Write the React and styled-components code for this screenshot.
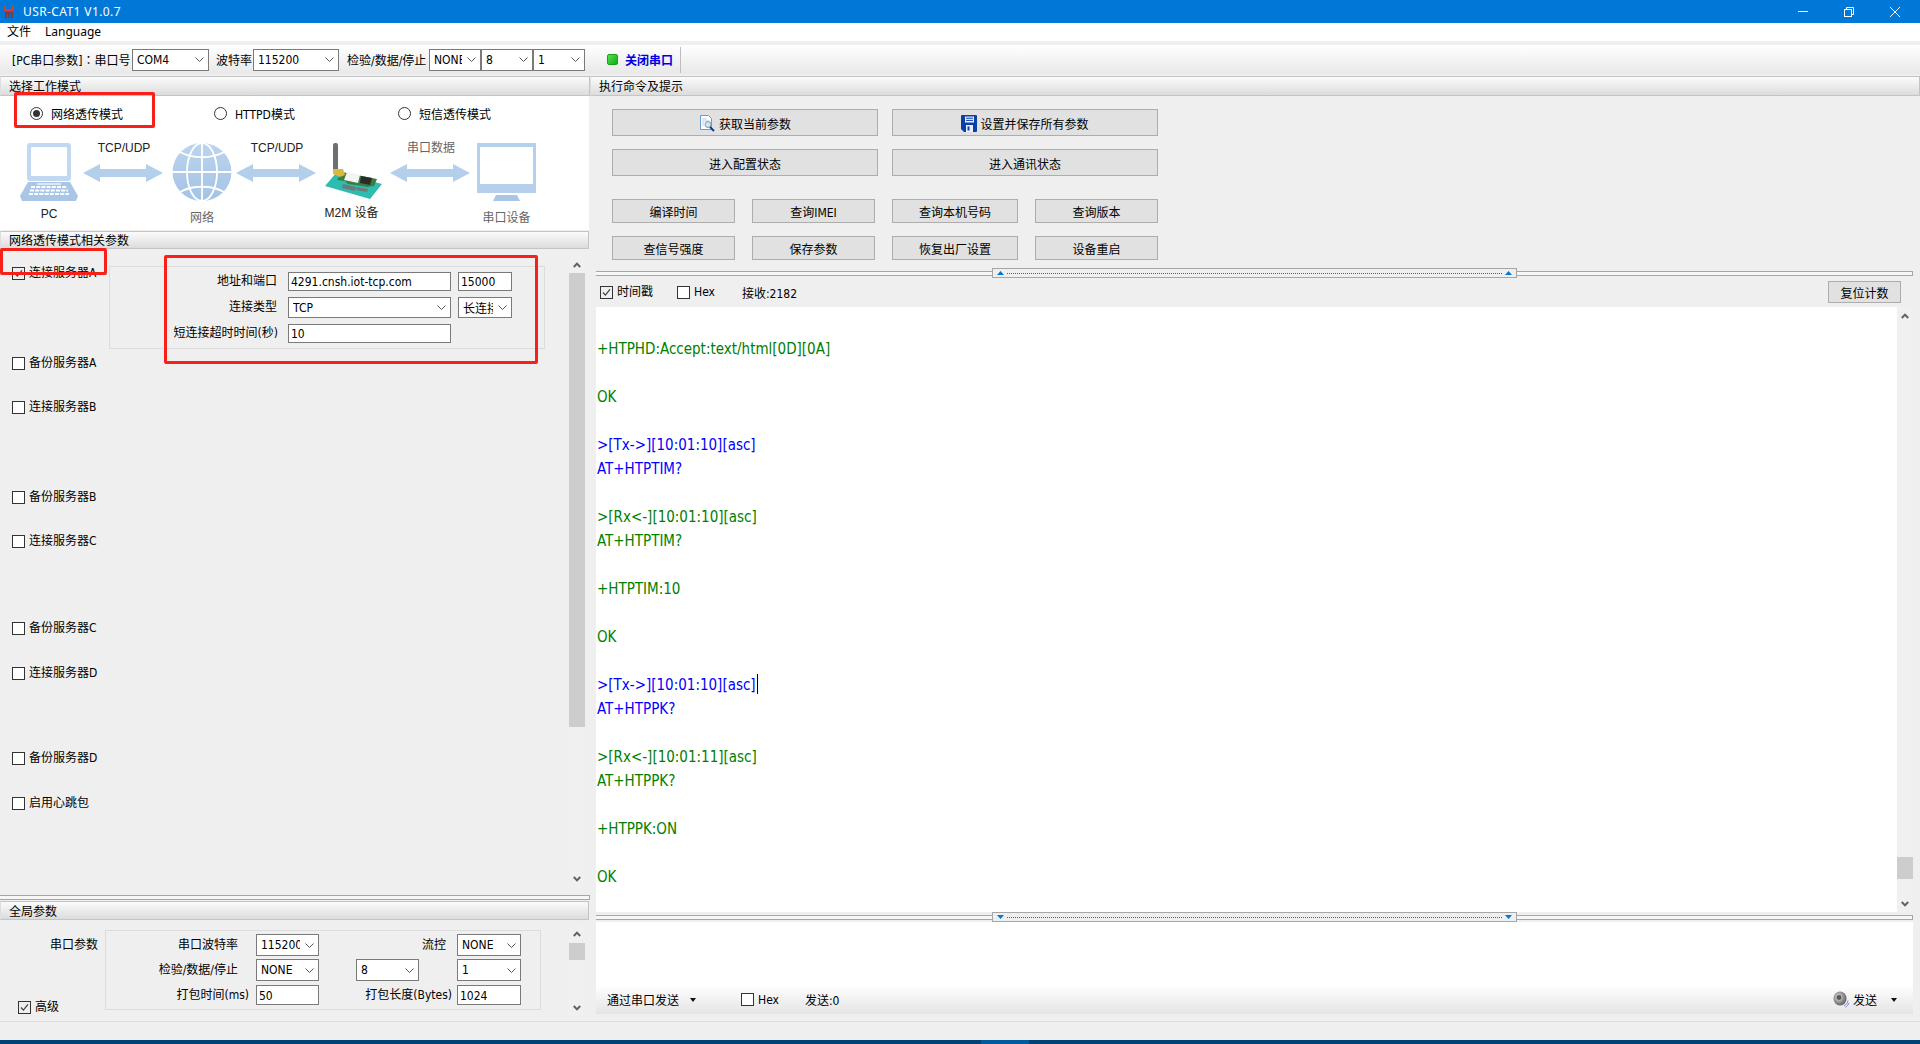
import styled, { createGlobalStyle } from "styled-components";

const GlobalStyle = createGlobalStyle`
  html, body { margin: 0; padding: 0; background: #efefef; }
  body {
    font-family: "DejaVu Sans Condensed", "Noto Sans CJK SC", sans-serif;
    font-size: 12px;
    color: #000;
  }
  * { box-sizing: border-box; }
`;

const Page = styled.div`
  width: 1920px;
  height: 1044px;
  display: flex;
  flex-direction: column;
  overflow: hidden;
  background: #efefef;
`;

/* window chrome */
const TitleBar = styled.div`
  height: 23px;
  background: #0078d7;
  color: #fff;
  display: flex;
  align-items: center;
  padding-left: 4px;
`;
const TitleText = styled.span`
  margin-left: 9px;
  line-height: 23px;
  font-family: "Noto Sans", sans-serif;
  letter-spacing: .4px;
`;
const WinControls = styled.div`
  margin-left: auto;
  display: flex;
  align-items: center;
  padding-right: 20px;
  gap: 36px;
`;
const MenuBar = styled.div`
  height: 18px;
  background: #fff;
  display: flex;
  align-items: center;
  padding-left: 7px;
  gap: 14px;
  line-height: 20px;
  margin-bottom: 4px;
  font-family: "Noto Sans", "Noto Sans CJK SC", sans-serif;
`;
const ToolBar = styled.div`
  height: 29px;
  background: linear-gradient(#fff, #e8e8e8);
  display: flex;
  align-items: center;
  padding-left: 12px;
`;
const ToolLabel = styled.span`
  width: ${p => p.$w}px;
  margin-left: ${p => p.$ml || 0}px;
  white-space: nowrap;
`;
const FullColon = styled.span`
  font-family: "Noto Sans CJK TC", sans-serif;
`;
const Led = styled.span`
  width: 11px;
  height: 11px;
  margin-left: 22px;
  border-radius: 2px;
  border: 1px solid #1a9e1a;
  background: linear-gradient(135deg, #55e055, #0fae0f);
`;
const PortToggle = styled.span`
  margin-left: 7px;
  color: #0000e6;
  font-weight: 700;
`;
const ToolSep = styled.span`
  width: 1px;
  height: 26px;
  margin-left: 7px;
  background: #bdbdbd;
`;

/* main split */
const Main = styled.div`
  flex: 1;
  display: grid;
  grid-template-columns: 590px 1fr;
  min-height: 0;
`;
const LeftColumn = styled.div`
  display: flex;
  flex-direction: column;
  padding-top: 2px;
  min-height: 0;
`;
const RightColumn = styled.div`
  display: flex;
  flex-direction: column;
  padding-top: 2px;
  min-height: 0;
`;
const SectionHeader = styled.div`
  height: ${p => p.$h}px;
  margin-top: ${p => p.$mt || 0}px;
  margin-right: ${p => p.$mr || 0}px;
  padding-left: 8px;
  line-height: ${p => p.$h + 1}px;
  background: linear-gradient(#fbfbfb, #dcdcdc);
  border: 1px solid #c4c4c4;
  border-left-color: #dedede;
  border-radius: 1px;
  overflow: hidden;
`;

const ModePanel = styled.div`
  position: relative;
  height: 134px;
  margin-right: 1px;
  background: #fff;
`;
const ModeRow = styled.div`
  height: 34px;
  display: flex;
  align-items: center;
`;
const ModeOption = styled.label`
  width: 184px;
  padding-left: 30px;
  display: flex;
  align-items: center;
  gap: 8px;
`;
const Radio = styled.span`
  width: 13px;
  height: 13px;
  border-radius: 50%;
  border: 1px solid #333;
  background: #fff;
  display: flex;
  align-items: center;
  justify-content: center;
  &::after {
    content: "";
    width: 7px;
    height: 7px;
    border-radius: 50%;
    background: ${p => (p.$on ? "#333" : "transparent")};
  }
`;
const Diagram = styled.div`
  display: flex;
  align-items: flex-start;
  padding: 13px 0 0 20px;
`;
const DeviceCell = styled.div`
  display: flex;
  flex-direction: column;
  align-items: center;
  width: ${p => p.$w}px;
  margin-left: ${p => p.$ml || 0}px;
`;
const DeviceLabel = styled.span`
  margin-top: ${p => p.$mt}px;
  margin-right: ${p => p.$mr || 0}px;
  line-height: 14px;
  white-space: nowrap;
  font-family: "Liberation Sans", "Noto Sans CJK SC", sans-serif;
  color: ${p => (p.$muted ? "#666" : "#222")};
`;
const LinkCell = styled.div`
  display: flex;
  flex-direction: column;
  align-items: center;
  width: 80px;
  margin-top: -2px;
  margin-left: ${p => p.$ml}px;
`;
const LinkLabel = styled.span`
  line-height: 14px;
  margin-bottom: 9px;
  padding-left: 2px;
  font-family: "Liberation Sans", "Noto Sans CJK SC", sans-serif;
  color: ${p => (p.$muted ? "#666" : "#222")};
`;

const Highlight = styled.div`
  position: absolute;
  left: ${p => p.$x}px;
  top: ${p => p.$y}px;
  width: ${p => p.$w}px;
  height: ${p => p.$h}px;
  border: 3px solid #f8211a;
  border-radius: 2px;
  pointer-events: none;
`;

/* left scroll area */
const ScrollArea = styled.div`
  position: relative;
  height: 644px;
  display: grid;
  grid-template-columns: 569px 16px;
`;
const ServerList = styled.div`
  display: flex;
  flex-direction: column;
`;
const ServerRow = styled.div`
  display: flex;
  align-items: flex-start;
  padding-left: ${p => p.$pl || 12}px;
  margin-top: ${p => p.$mt}px;
`;
const CheckItem = styled.label`
  display: flex;
  align-items: center;
  gap: 4px;
  height: ${p => p.$h || 16}px;
  line-height: 16px;
  margin-left: ${p => p.$ml || 0}px;
  white-space: nowrap;
`;
const Box = styled.span`
  width: 13px;
  height: 13px;
  border: 1px solid #333;
  background: ${p => (p.$plain ? "#fff" : "transparent")};
  display: flex;
  align-items: center;
  justify-content: center;
`;
const FirstCheck = styled.div`
  width: 97px;
  margin-top: 16px;
`;
const ServerGroup = styled.div`
  width: 436px;
  height: 83px;
  margin-top: 17px;
  padding-top: 5px;
  border: 1px solid #dcdcdc;
  display: grid;
  grid-template-columns: 171px 163px 54px;
  column-gap: 7px;
  row-gap: 6px;
  grid-template-rows: 19px 21px 19px;
`;
const FieldLabel = styled.span`
  justify-self: end;
  align-self: center;
  padding-right: ${p => p.$pr || 0}px;
  white-space: nowrap;
  line-height: 17px;
`;
const TextInput = styled.div`
  height: ${p => p.$h || 19}px;
  border: 1px solid #7a7a7a;
  background: #fff;
  padding-left: 2px;
  line-height: ${p => p.$h || 19}px;
  overflow: hidden;
  white-space: nowrap;
`;
const SelectBox = styled.div`
  width: ${p => (p.$w ? `${p.$w}px` : "auto")};
  height: ${p => p.$h || 22}px;
  margin-right: ${p => p.$mr || 0}px;
  justify-self: ${p => (p.$mr ? "end" : "stretch")};
  border: 1px solid #7a7a7a;
  background: #fff;
  display: flex;
  align-items: center;
  padding-left: 4px;
  flex: none;
`;
const SelectValue = styled.span`
  flex: 1;
  min-width: 0;
  overflow: hidden;
  white-space: nowrap;
`;
const SelectArrow = styled.span`
  width: 18px;
  flex: none;
  display: flex;
  justify-content: center;
`;

/* scrollbars */
const ScrollBar = styled.div`
  width: 16px;
  height: ${p => p.$h}px;
  margin-top: ${p => p.$mt || 0}px;
  margin-left: ${p => p.$ml || 0}px;
  flex: none;
  display: flex;
  flex-direction: column;
  background: #f0f0f0;
`;
const ScrollArrow = styled.span`
  height: 17px;
  flex: none;
  display: flex;
  align-items: center;
  justify-content: center;
`;
const ScrollTrack = styled.div`
  flex: 1;
  min-height: 0;
`;
const ScrollThumb = styled.div`
  height: ${p => p.$h}px;
  margin-top: ${p => p.$top || 0}px;
  background: #cdcdcd;
`;

/* splitters */
const Splitter = styled.div`
  position: relative;
  height: ${p => p.$h}px;
  flex: none;
  display: flex;
  align-items: center;
  background: ${p => p.$bg || "transparent"};
`;
const SplitLines = styled.div`
  flex: 1;
  height: 5px;
  border-top: 1px solid #a6a6a6;
  border-bottom: 1px solid #a6a6a6;
  border-right: 1px solid #a6a6a6;
  background: #f7f7f7;
`;
const SplitHandle = styled.div`
  position: absolute;
  left: 396px;
  top: 0;
  bottom: 0;
  width: 525px;
  padding: 0 4px;
  border: 1px solid #a6a6a6;
  background: #efefef;
  display: flex;
  align-items: center;
  gap: 3px;
`;
const DottedLine = styled.span`
  flex: 1;
  border-top: 1px dotted #0078d7;
`;

/* global parameters */
const GlobalBody = styled.div`
  flex: 1;
  display: flex;
  align-items: flex-start;
  padding-top: 10px;
`;
const GlobalSide = styled.div`
  width: 105px;
  height: 85px;
  display: flex;
  flex-direction: column;
  justify-content: space-between;
`;
const SideLabel = styled.span`
  align-self: flex-end;
  margin: 7px 7px 0 0;
  line-height: 16px;
`;
const SideCheck = styled.div`
  padding-left: 18px;
`;
const GlobalGroup = styled.div`
  width: 436px;
  height: 80px;
  padding: 3px 19px 0 0;
  border: 1px solid #dcdcdc;
  display: grid;
  grid-template-columns: 150px 63px 1fr 64px;
  grid-template-rows: 22px 23px 20px;
  row-gap: 3px;
`;

/* right side */
const CommandRow = styled.div`
  display: grid;
  grid-template-columns: ${p => p.$cols};
  column-gap: ${p => p.$gap}px;
  margin-top: ${p => p.$mt}px;
  padding-left: 22px;
`;
const CommandButton = styled.button`
  height: ${p => p.$h}px;
  padding: ${p => (p.$h > 25 ? "2px 0 0" : "0")};
  border: 1px solid #adadad;
  border-radius: 0;
  background: #e1e1e1;
  font: inherit;
  color: #000;
  display: flex;
  align-items: center;
  justify-content: center;
  gap: 3px;
`;
const RxWrap = styled.div`
  flex: 1;
  min-height: 0;
  display: flex;
  flex-direction: column;
  margin-top: 8px;
  padding: 0 7px 0 6px;
`;
const RxBar = styled.div`
  height: 28px;
  flex: none;
  display: flex;
  align-items: center;
  padding: 0 12px 0 4px;
`;
const Counter = styled.span`
  margin-left: ${p => p.$ml}px;
  white-space: nowrap;
`;
const ResetButton = styled(CommandButton)`
  width: 73px;
  margin-left: auto;
`;
const TerminalWrap = styled.div`
  height: 605px;
  margin-top: 1px;
  flex: none;
  display: flex;
  background: #fff;
`;
const TerminalText = styled.div`
  flex: 1;
  padding: 6px 0 0 1px;
  font-size: 15px;
  line-height: 24px;
  overflow: hidden;
`;
const TermLine = styled.div`
  height: 24px;
  white-space: nowrap;
  color: ${p => (p.$tx ? "#0000ff" : "#008000")};
`;
const Caret = styled.span`
  display: inline-block;
  width: 1px;
  height: 20px;
  margin-left: 1px;
  vertical-align: -4px;
  background: #000;
`;
const SendBox = styled.div`
  height: 92px;
  flex: none;
  display: flex;
  flex-direction: column;
  background: #fff;
`;
const SendInput = styled.div`
  flex: 1;
`;
const SendBar = styled.div`
  height: 29px;
  flex: none;
  display: flex;
  align-items: center;
  padding: 0 16px 0 11px;
  background: linear-gradient(#fff, #e4e4e4);
`;
const DropMark = styled.span`
  margin-left: ${p => p.$ml}px;
  border-left: 3px solid transparent;
  border-right: 3px solid transparent;
  border-top: 4px solid #111;
`;
const SendAction = styled.div`
  margin-left: auto;
  display: flex;
  align-items: center;
  gap: 3px;
`;

const Footer = styled.div`
  height: 19px;
  flex: none;
  border-top: 1px solid #dcdcdc;
`;
const TaskBar = styled.div`
  height: 4px;
  flex: none;
  background: #004275;
  padding-left: 981px;
`;
const TaskItem = styled.div`
  width: 48px;
  height: 4px;
  background: #005a9e;
`;

/* drawings */
const AppIcon = () => (
  <svg width="10" height="12" viewBox="0 0 10 12">
    <path d="M0 0h2v3h6V0h2v5H0z" fill="#c8403c" />
    <path d="M1 6h8v6H7V8H6v4H4V8H3v4H1z" fill="#7d3a4e" />
  </svg>
);
const MinIcon = () => (
  <svg width="10" height="2" viewBox="0 0 10 2"><rect width="10" height="1" fill="#fff" /></svg>
);
const RestoreIcon = () => (
  <svg width="10" height="10" viewBox="0 0 10 10" fill="none" stroke="#fff">
    <rect x=".5" y="2.5" width="7" height="7" />
    <path d="M2.5 2.5v-2h7v7h-2" />
  </svg>
);
const CloseIcon = () => (
  <svg width="10" height="10" viewBox="0 0 10 10" stroke="#fff"><path d="M0 0l10 10M10 0L0 10" /></svg>
);
const Chevron = () => (
  <svg width="9" height="5" viewBox="0 0 9 5" fill="none" stroke="#555"><path d="M.5.5l4 4 4-4" /></svg>
);
const ScrollUp = () => (
  <svg width="8" height="6" viewBox="0 0 8 6" fill="none" stroke="#606060" strokeWidth="2"><path d="M.8 5L4 1.6 7.2 5" /></svg>
);
const ScrollDown = () => (
  <svg width="8" height="6" viewBox="0 0 8 6" fill="none" stroke="#606060" strokeWidth="2"><path d="M.8 1L4 4.4 7.2 1" /></svg>
);
const Tick = () => (
  <svg width="11" height="11" viewBox="0 0 11 11" fill="none" stroke="#444" strokeWidth="1.3"><path d="M2 5.5l2.4 2.6L9 2.4" /></svg>
);
const LinkArrow = () => (
  <svg width="80" height="18" viewBox="0 0 80 18">
    <path d="M0 9L17 0v5h46V0l17 9-17 9v-5H17v5z" fill="#b3cfeb" />
  </svg>
);
const Laptop = () => (
  <svg width="58" height="58" viewBox="0 0 58 58">
    <rect x="7" width="44" height="38" rx="3" fill="#c2d8f0" />
    <rect x="11" y="4" width="36" height="29" rx="1" fill="#fff" />
    <path d="M8 39h42l8 14-2 5H2l-2-5z" fill="#a9c6e6" />
    <rect x="17" y="40" width="24" height="2" fill="#dbe8f6" />
    <path d="M11 44h36M10 47.5h38M9 51h40" stroke="#fff" strokeWidth="2.2" strokeDasharray="4 1.2" />
  </svg>
);
const Globe = () => (
  <svg width="60" height="58" viewBox="0 0 60 58" fill="none">
    <defs>
      <linearGradient id="globeFill" x1="0" y1="0" x2="0" y2="1">
        <stop offset="0" stopColor="#bcd4ee" />
        <stop offset="1" stopColor="#a4c3e5" />
      </linearGradient>
    </defs>
    <ellipse cx="30" cy="29" rx="29.5" ry="29" fill="url(#globeFill)" />
    <g stroke="#fff" strokeWidth="1.8">
      <path d="M0 29h60M30 0v58" />
      <ellipse cx="30" cy="29" rx="15" ry="29" />
      <path d="M8 9c12 7 32 7 44 0M8 49c12-7 32-7 44 0" />
    </g>
  </svg>
);
const Module = () => (
  <svg width="57" height="56" viewBox="0 0 57 56">
    <path d="M0 43l12-14 45 12-12 15z" fill="#2cbcb0" />
    <path d="M12 37l5-8 35 7-3 7-7 1-5-1-14-2-3-3z" fill="#3b7d43" />
    <rect x="8" width="5" height="28" rx="2" fill="#6f6f6f" />
    <path d="M8 26h10l2 6-5 2-7-3z" fill="#d9b93f" />
    <path d="M22 29l13 3-2 8-14-3z" fill="#f4f4f4" />
    <path d="M36 33l11 2-2 7-10-2z" fill="#2b2b2b" />
    <path d="M18 41l13 3-1 4-13-3zM32 44l11 2-1 3-11-2z" fill="#6d7a77" />
  </svg>
);
const Monitor = () => (
  <svg width="59" height="58" viewBox="0 0 59 58">
    <rect width="59" height="50" fill="#b5d0ec" />
    <rect x="3" y="4" width="53" height="37" fill="#fff" />
    <path d="M19 52h21l3 6H16z" fill="#a9c6e6" />
  </svg>
);
const DocSearch = () => (
  <svg width="17" height="17" viewBox="0 0 17 17">
    <path d="M1.5.5h8l3 3v11h-11z" fill="#fff" stroke="#6a9bd0" />
    <path d="M3 4h5M3 6h7M3 8h2M3 10h2" stroke="#b9cfe6" />
    <circle cx="9" cy="9.5" r="3" fill="#cde6f2" stroke="#7d9cb4" />
    <path d="M11 12l4 4" stroke="#0b3f92" strokeWidth="2" />
  </svg>
);
const Floppy = () => (
  <svg width="16" height="17" viewBox="0 0 16 17">
    <path d="M1 0h14a1 1 0 011 1v15a1 1 0 01-1 1H3l-3-3V1a1 1 0 011-1z" fill="#0a3fa8" />
    <rect x="4" y="1.5" width="9" height="6" fill="#e8eefb" />
    <path d="M5 3.2h7M5 5.4h7" stroke="#0a3fa8" />
    <rect x="5" y="10" width="7" height="7" fill="#e8eefb" />
    <rect x="6.5" y="11.5" width="2" height="4" fill="#0a3fa8" />
  </svg>
);
const Speaker = () => (
  <svg width="17" height="17" viewBox="0 0 17 17" fill="none">
    <defs>
      <radialGradient id="coneFill" cx=".4" cy=".4" r=".7">
        <stop offset="0" stopColor="#e4e4e4" />
        <stop offset="1" stopColor="#4c4c4c" />
      </radialGradient>
    </defs>
    <ellipse cx="7" cy="7.5" rx="6.5" ry="7" fill="url(#coneFill)" />
    <circle cx="6" cy="6.5" r="2.4" fill="#5a5a5a" />
    <path d="M15 9.5c-.3 2.5-2 4.4-4 5.4M16 12c-.8 2-2 3.4-3.6 4.3" stroke="#7c7cf0" />
  </svg>
);
const Triangle = ({ down }) => (
  <svg width="7" height="4" viewBox="0 0 7 4">
    <path d={down ? "M0 0h7L3.5 4z" : "M0 4h7L3.5 0z"} fill="#0078d7" />
  </svg>
);

/* small helpers */
const Select = ({ value, w, h, mr }) => (
  <SelectBox $w={w} $h={h} $mr={mr}>
    <SelectValue>{value}</SelectValue>
    <SelectArrow><Chevron /></SelectArrow>
  </SelectBox>
);
const Check = ({ checked, plain, label, ml }) => (
  <CheckItem $ml={ml}>
    <Box $plain={plain}>{checked && <Tick />}</Box>
    {label}
  </CheckItem>
);
const Bar = ({ h, mt, ml, thumbTop, thumbH }) => (
  <ScrollBar $h={h} $mt={mt} $ml={ml}>
    <ScrollArrow><ScrollUp /></ScrollArrow>
    <ScrollTrack><ScrollThumb $top={thumbTop} $h={thumbH} /></ScrollTrack>
    <ScrollArrow><ScrollDown /></ScrollArrow>
  </ScrollBar>
);
const Split = ({ down, h, bg }) => (
  <Splitter $h={h} $bg={bg}>
    <SplitLines />
    <SplitHandle>
      <Triangle down={down} />
      <DottedLine />
      <Triangle down={down} />
    </SplitHandle>
  </Splitter>
);

const otherRows = [
  { label: "备份服务器A", mt: 6 },
  { label: "连接服务器B", mt: 28 },
  { label: "备份服务器B", mt: 74 },
  { label: "连接服务器C", mt: 28 },
  { label: "备份服务器C", mt: 71 },
  { label: "连接服务器D", mt: 29 },
  { label: "备份服务器D", mt: 69 },
  { label: "启用心跳包", mt: 29 },
];

const log = [
  { text: "" },
  { text: "+HTPHD:Accept:text/html[0D][0A]" },
  { text: "" },
  { text: "OK" },
  { text: "" },
  { text: ">[Tx->][10:01:10][asc]", tx: true },
  { text: "AT+HTPTIM?", tx: true },
  { text: "" },
  { text: ">[Rx<-][10:01:10][asc]" },
  { text: "AT+HTPTIM?" },
  { text: "" },
  { text: "+HTPTIM:10" },
  { text: "" },
  { text: "OK" },
  { text: "" },
  { text: ">[Tx->][10:01:10][asc]", tx: true, caret: true },
  { text: "AT+HTPPK?", tx: true },
  { text: "" },
  { text: ">[Rx<-][10:01:11][asc]" },
  { text: "AT+HTPPK?" },
  { text: "" },
  { text: "+HTPPK:ON" },
  { text: "" },
  { text: "OK" },
];

const App = () => {
  return (
    <Page>
      <GlobalStyle />
      <TitleBar>
        <AppIcon />
        <TitleText>USR-CAT1 V1.0.7</TitleText>
        <WinControls>
          <MinIcon />
          <RestoreIcon />
          <CloseIcon />
        </WinControls>
      </TitleBar>
      <MenuBar>
        <span>文件</span>
        <span>Language</span>
      </MenuBar>
      <ToolBar>
        <ToolLabel $w={120}>[PC串口参数]<FullColon>：</FullColon>串口号</ToolLabel>
        <Select value="COM4" w={77} />
        <ToolLabel $w={37} $ml={7}>波特率</ToolLabel>
        <Select value="115200" w={86} />
        <ToolLabel $w={82} $ml={8}>检验/数据/停止</ToolLabel>
        <Select value="NONE" w={52} />
        <Select value="8" w={52} />
        <Select value="1" w={52} />
        <Led />
        <PortToggle>关闭串口</PortToggle>
        <ToolSep />
      </ToolBar>

      <Main>
        <LeftColumn>
          <SectionHeader $h={20}>选择工作模式</SectionHeader>
          <ModePanel>
            <ModeRow>
              <ModeOption><Radio $on />网络透传模式</ModeOption>
              <ModeOption><Radio />HTTPD模式</ModeOption>
              <ModeOption><Radio />短信透传模式</ModeOption>
            </ModeRow>
            <Diagram>
              <DeviceCell $w={58}>
                <Laptop />
                <DeviceLabel $mt={6}>PC</DeviceLabel>
              </DeviceCell>
              <LinkCell $ml={5}>
                <LinkLabel>TCP/UDP</LinkLabel>
                <LinkArrow />
              </LinkCell>
              <DeviceCell $w={60} $ml={9}>
                <Globe />
                <DeviceLabel $mt={10} $muted>网络</DeviceLabel>
              </DeviceCell>
              <LinkCell $ml={4}>
                <LinkLabel>TCP/UDP</LinkLabel>
                <LinkArrow />
              </LinkCell>
              <DeviceCell $w={57} $ml={9}>
                <Module />
                <DeviceLabel $mt={7} $mr={4}>M2M 设备</DeviceLabel>
              </DeviceCell>
              <LinkCell $ml={8}>
                <LinkLabel $muted>串口数据</LinkLabel>
                <LinkArrow />
              </LinkCell>
              <DeviceCell $w={59} $ml={7}>
                <Monitor />
                <DeviceLabel $mt={10} $muted>串口设备</DeviceLabel>
              </DeviceCell>
            </Diagram>
            <Highlight $x={14} $y={-4} $w={141} $h={36} />
          </ModePanel>

          <SectionHeader $h={18} $mt={1} $mr={1}>网络透传模式相关参数</SectionHeader>
          <ScrollArea>
            <ServerList>
              <ServerRow $mt={0}>
                <FirstCheck>
                  <Check checked label="连接服务器A" />
                </FirstCheck>
                <ServerGroup>
                  <FieldLabel $pr={4}>地址和端口</FieldLabel>
                  <TextInput>4291.cnsh.iot-tcp.com</TextInput>
                  <TextInput>15000</TextInput>
                  <FieldLabel $pr={4}>连接类型</FieldLabel>
                  <Select value="TCP" h={21} />
                  <Select value="长连接" h={21} />
                  <FieldLabel $pr={3}>短连接超时时间(秒)</FieldLabel>
                  <TextInput>10</TextInput>
                </ServerGroup>
              </ServerRow>
              {otherRows.map(row => (
                <ServerRow key={row.label} $mt={row.mt}>
                  <Check plain label={row.label} />
                </ServerRow>
              ))}
            </ServerList>
            <Bar h={631} mt={7} thumbH={454} />
            <Highlight $x={0} $y={-1} $w={107} $h={27} />
            <Highlight $x={164} $y={6} $w={374} $h={109} />
          </ScrollArea>

          <Splitter $h={8}>
            <SplitLines />
          </Splitter>
          <SectionHeader $h={19} $mr={1}>全局参数</SectionHeader>
          <GlobalBody>
            <GlobalSide>
              <SideLabel>串口参数</SideLabel>
              <SideCheck>
                <Check checked label="高级" />
              </SideCheck>
            </GlobalSide>
            <GlobalGroup>
              <FieldLabel $pr={18}>串口波特率</FieldLabel>
              <Select value="115200" />
              <FieldLabel $pr={11}>流控</FieldLabel>
              <Select value="NONE" />
              <FieldLabel $pr={18}>检验/数据/停止</FieldLabel>
              <Select value="NONE" />
              <Select value="8" w={63} mr={38} />
              <Select value="1" />
              <FieldLabel $pr={7}>打包时间(ms)</FieldLabel>
              <TextInput $h={20}>50</TextInput>
              <FieldLabel $pr={5}>打包长度(Bytes)</FieldLabel>
              <TextInput $h={20}>1024</TextInput>
            </GlobalGroup>
            <Bar h={91} mt={-5} ml={28} thumbTop={1} thumbH={17} />
          </GlobalBody>
        </LeftColumn>

        <RightColumn>
          <SectionHeader $h={20}>执行命令及提示</SectionHeader>
          <CommandRow $cols="266px 266px" $gap={14} $mt={13}>
            <CommandButton $h={27}><DocSearch />获取当前参数</CommandButton>
            <CommandButton $h={27}><Floppy />设置并保存所有参数</CommandButton>
          </CommandRow>
          <CommandRow $cols="266px 266px" $gap={14} $mt={13}>
            <CommandButton $h={27}>进入配置状态</CommandButton>
            <CommandButton $h={27}>进入通讯状态</CommandButton>
          </CommandRow>
          <CommandRow $cols="123px 123px 126px 123px" $gap={17} $mt={23}>
            <CommandButton $h={24}>编译时间</CommandButton>
            <CommandButton $h={24}>查询IMEI</CommandButton>
            <CommandButton $h={24}>查询本机号码</CommandButton>
            <CommandButton $h={24}>查询版本</CommandButton>
          </CommandRow>
          <CommandRow $cols="123px 123px 126px 123px" $gap={17} $mt={13}>
            <CommandButton $h={24}>查信号强度</CommandButton>
            <CommandButton $h={24}>保存参数</CommandButton>
            <CommandButton $h={24}>恢复出厂设置</CommandButton>
            <CommandButton $h={24}>设备重启</CommandButton>
          </CommandRow>

          <RxWrap>
            <Split h={10} />
            <RxBar>
              <Check checked label="时间戳" />
              <Check plain label="Hex" ml={24} />
              <Counter $ml={27}>接收:2182</Counter>
              <ResetButton $h={22}>复位计数</ResetButton>
            </RxBar>
            <TerminalWrap>
              <TerminalText>
                {log.map((line, i) => (
                  <TermLine key={i} $tx={line.tx}>
                    {line.text}
                    {line.caret && <Caret />}
                  </TermLine>
                ))}
              </TerminalText>
              <Bar h={605} thumbTop={533} thumbH={22} />
            </TerminalWrap>
            <Split down h={10} bg="#efefef" />
            <SendBox>
              <SendInput />
              <SendBar>
                <span>通过串口发送</span>
                <DropMark $ml={11} />
                <Check plain label="Hex" ml={45} />
                <Counter $ml={26}>发送:0</Counter>
                <SendAction>
                  <Speaker />
                  <span>发送</span>
                  <DropMark $ml={11} />
                </SendAction>
              </SendBar>
            </SendBox>
          </RxWrap>
        </RightColumn>
      </Main>

      <Footer />
      <TaskBar>
        <TaskItem />
      </TaskBar>
    </Page>
  );
};

export default App;
